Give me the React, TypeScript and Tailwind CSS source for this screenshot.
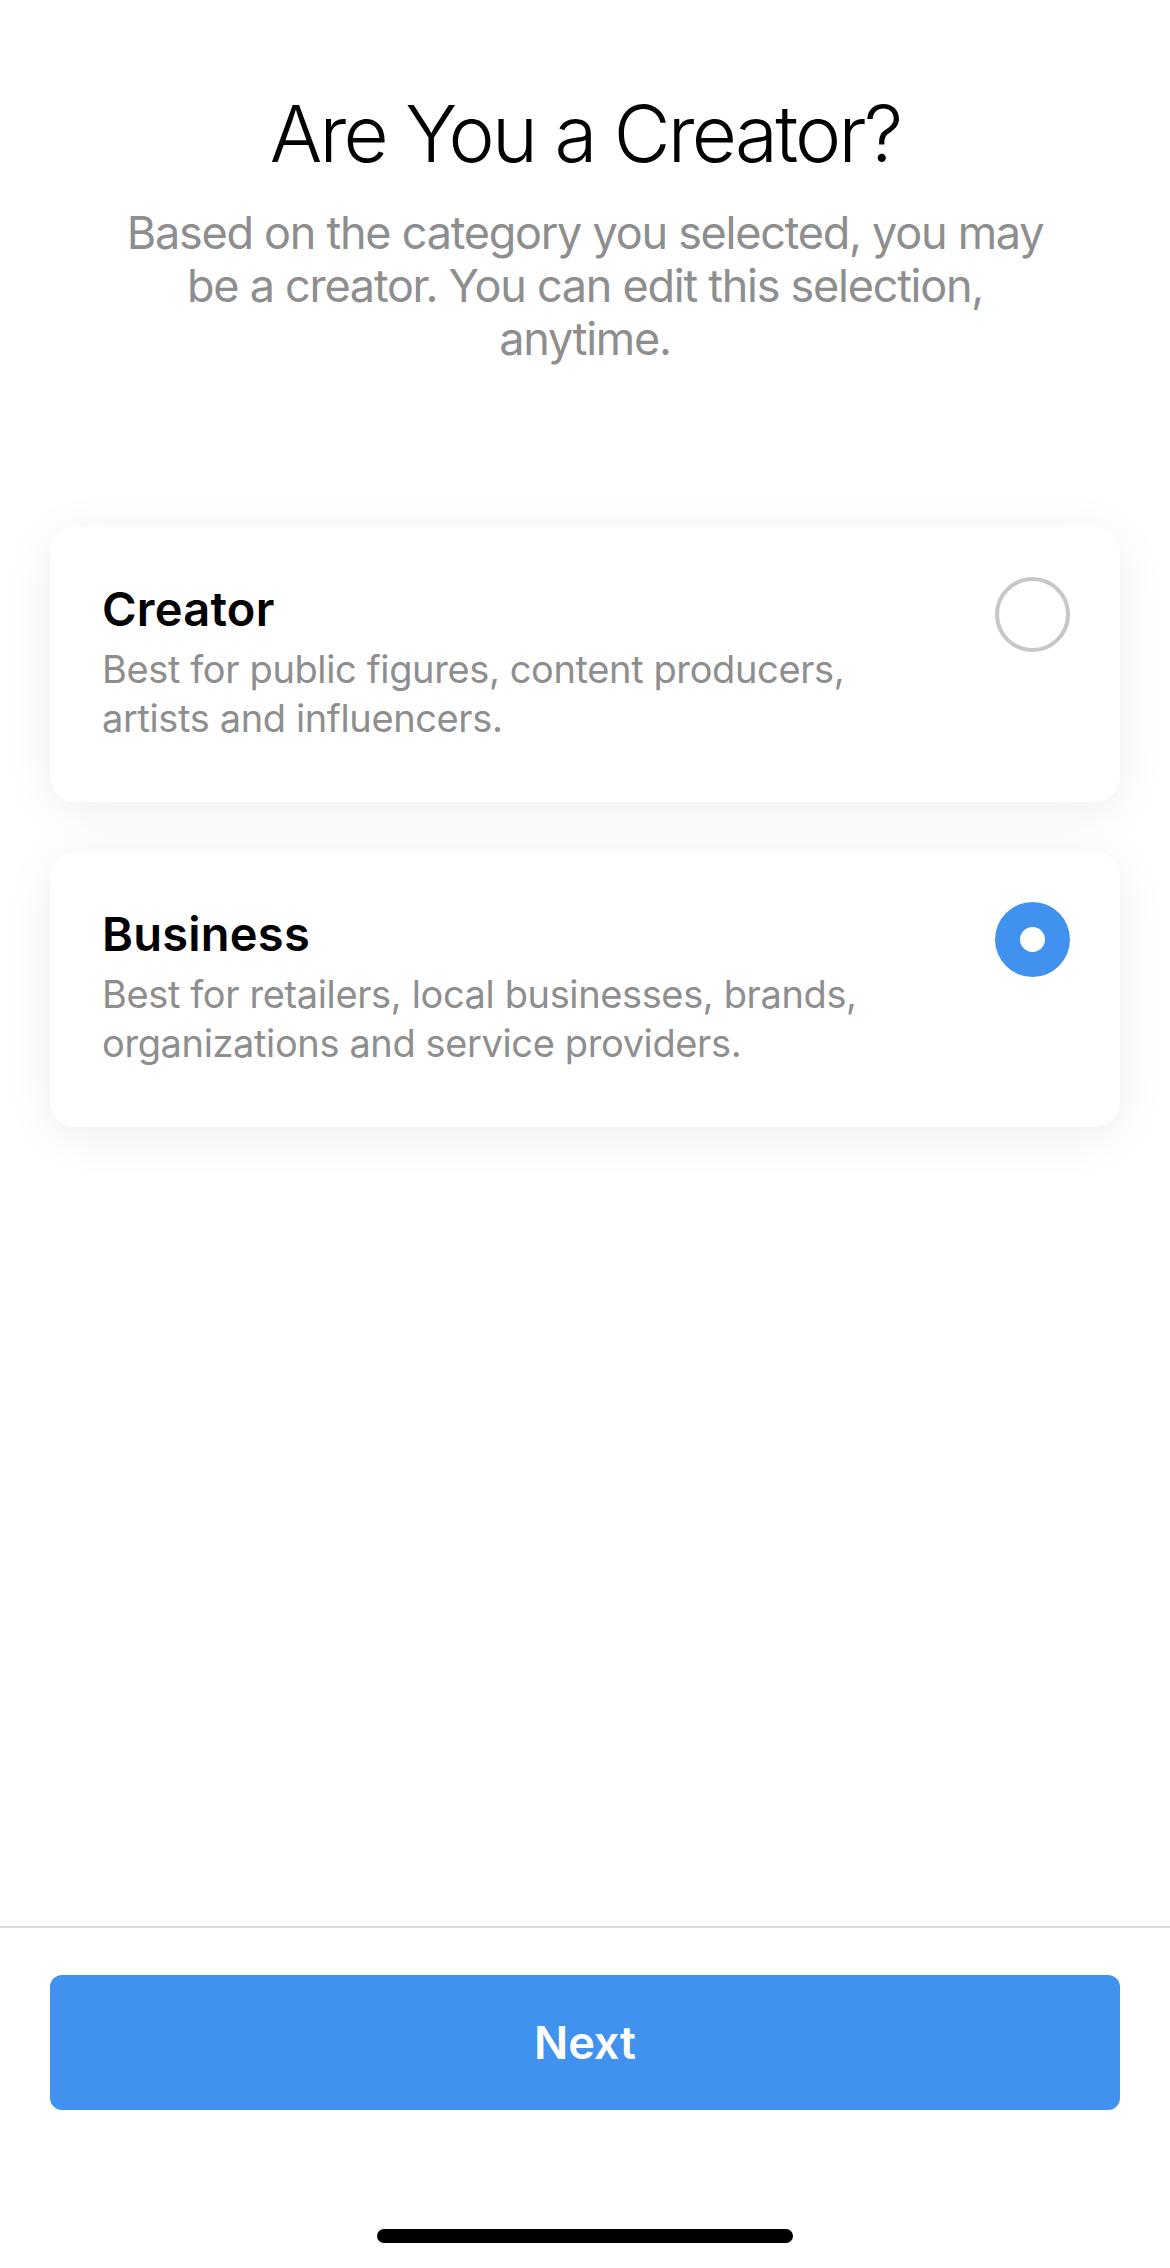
import { useState } from "react";

type Option = {
    id: string;
    title: string;
    lines: string[];
};

const options: Option[] = [
    { id: "creator", title: "Creator", lines: ["Best for public figures, content producers,", "artists and influencers."] },
    { id: "business", title: "Business", lines: ["Best for retailers, local businesses, brands,", "organizations and service providers."] },
];

export default function App() {
    const [selected, setSelected] = useState("business");

    return (
        <div className="h-[2268px] w-full bg-white flex flex-col font-['Inter','Liberation_Sans',sans-serif] antialiased">
            <div className="flex-1 flex flex-col">
                <h1 className="pt-[87px] text-center text-[78px] leading-[94px] font-light text-black tracking-[-0.035em]">
                    Are You a Creator?
                </h1>
                <p className="mt-[25px] text-center text-[45px] leading-[53px] text-[#8e8e8e] tracking-[-0.028em]">
                    Based on the category you selected, you may
                    <br />
                    be a creator. You can edit this selection,
                    <br />
                    anytime.
                </p>

                <div className="mt-[162px] mx-[50px] flex flex-col gap-[50px]">
                    {options.map(o => {
                        const active = selected === o.id;
                        return (
                            <button
                                key={o.id}
                                onClick={() => setSelected(o.id)}
                                className="h-[275px] bg-white rounded-[25px] shadow-[0_8px_50px_rgba(0,0,0,0.07)] pl-[52px] pr-[50px] pt-[50px] flex items-start justify-between text-left"
                            >
                                <div className="pt-[5px]">
                                    <h3 className="text-[47px] leading-[54px] font-semibold text-black tracking-[0.005em]">{o.title}</h3>
                                    <p className="mt-[9px] text-[38px] leading-[49px] text-[#8e8e8e] whitespace-nowrap tracking-[-0.01em]">
                                        {o.lines[0]}
                                        <br />
                                        {o.lines[1]}
                                    </p>
                                </div>
                                {active ? (
                                    <span className="w-[75px] h-[75px] rounded-full bg-[#4192ee] flex items-center justify-center shrink-0">
                                        <span className="w-[25px] h-[25px] rounded-full bg-white" />
                                    </span>
                                ) : (
                                    <span className="w-[75px] h-[75px] rounded-full border-4 border-[#c7c7c7] shrink-0" />
                                )}
                            </button>
                        );
                    })}
                </div>
            </div>

            <div className="border-t-2 border-[#dbdbdb]">
                <button className="mt-[47px] mx-[50px] w-[1070px] h-[135px] rounded-[12px] bg-[#4192ee] text-white text-[45px] font-semibold">
                    Next
                </button>
                <div className="mt-[119px] pb-[25px] flex justify-center">
                    <div className="w-[416px] h-[14px] rounded-full bg-black" />
                </div>
            </div>
        </div>
    );
}
